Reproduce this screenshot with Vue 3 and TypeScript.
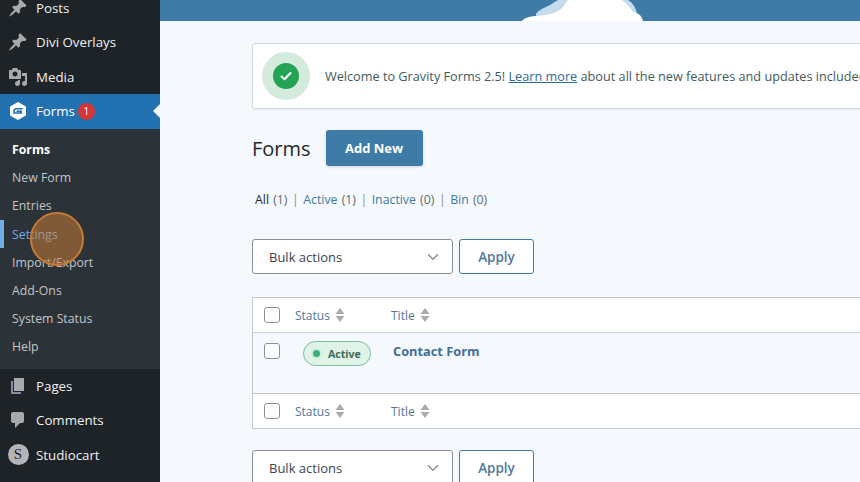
<script setup lang="ts">
const topItems = [
  { label: 'Posts', icon: 'pin' },
  { label: 'Divi Overlays', icon: 'pin' },
  { label: 'Media', icon: 'media' }
]
const subItems = ['Forms', 'New Form', 'Entries', 'Settings', 'Import/Export', 'Add-Ons', 'System Status', 'Help']
const filters = [
  { label: 'All', count: 1 },
  { label: 'Active', count: 1 },
  { label: 'Inactive', count: 0 },
  { label: 'Bin', count: 0 }
]
</script>

<template>
  <div class="page">
    <aside class="sidebar">
      <div v-for="item in topItems" :key="item.label" class="menu-item">
        <span class="menu-icon">
          <svg v-if="item.icon === 'pin'" width="20" height="20" viewBox="0 0 20 20">
            <path d="M10.44 3.02l1.82-1.82 6.36 6.35-1.83 1.82c-1.05-.68-2.48-.57-3.41.36l-.75.75c-.92.93-1.04 2.35-.35 3.41l-1.83 1.82-2.41-2.41-2.8 2.79c-.42.42-3.38 2.71-3.8 2.29s1.86-3.39 2.28-3.81l2.79-2.79L4.1 9.36l1.83-1.82c1.05.69 2.48.57 3.4-.36l.75-.75c.93-.92 1.05-2.35.36-3.41z" fill="#a7aaad" />
          </svg>
          <svg v-else width="20" height="20" viewBox="0 0 20 20">
            <path d="M13 11V4c0-.55-.45-1-1-1h-1.67L9 1H5L3.67 3H2c-.55 0-1 .45-1 1v7c0 .55.45 1 1 1h10c.55 0 1-.45 1-1zM7 4.500c1.380 0 2.500 1.120 2.500 2.500S8.380 9.500 7 9.500 4.500 8.380 4.500 7 5.620 4.500 7 4.500zM14 6h5v10.500c0 1.380-1.120 2.500-2.500 2.500S14 17.880 14 16.500s1.120-2.500 2.500-2.500c.17 0 .34.020.5.050V9h-3V6zm-4 8.050V13h2v3.500c0 1.380-1.120 2.500-2.500 2.500S7 17.880 7 16.500 8.120 14 9.500 14c.17 0 .34.020.5.050z" fill="#a7aaad" />
          </svg>
        </span>
        <span>{{ item.label }}</span>
      </div>

      <div class="menu-item current">
        <span class="menu-icon">
          <svg width="20" height="20" viewBox="0 0 20 20">
            <path d="M10 2 17 6v8l-7 4-7-4V6Z" fill="#fff" stroke="#fff" stroke-width="2" stroke-linejoin="round" />
            <path d="M14.500 7.800H8.200C6.900 7.800 6.200 8.600 6 10.200v1.800h7.300v-1.700H8.500" fill="none" stroke="#2271b1" stroke-width="1.600" />
          </svg>
        </span>
        <span>Forms</span>
        <span class="badge">1</span>
      </div>

      <div class="submenu">
        <div
          v-for="(sub, i) in subItems"
          :key="sub"
          class="sub-item"
          :class="{ head: i === 0, hovered: sub === 'Settings' }"
        >
          {{ sub }}
        </div>
      </div>

      <div class="menu-item">
        <span class="menu-icon">
          <svg width="20" height="20" viewBox="0 0 20 20">
            <path d="M5 16h8v2H3V5h2z" fill="#8f86a5" />
            <path d="M6 15V2h10v13z" fill="#a7aaad" />
          </svg>
        </span>
        <span>Pages</span>
      </div>
      <div class="menu-item">
        <span class="menu-icon">
          <svg width="20" height="20" viewBox="0 0 20 20">
            <path d="M5 2h9c1.100 0 2 .9 2 2v7c0 1.100-.9 2-2 2h-2l-5 5v-5H5c-1.100 0-2-.9-2-2V4c0-1.100.9-2 2-2z" fill="#a7aaad" />
          </svg>
        </span>
        <span>Comments</span>
      </div>
      <div class="menu-item">
        <span class="menu-icon">
          <span class="s-logo">S</span>
        </span>
        <span>Studiocart</span>
      </div>

      <div class="cursor-ring"></div>
    </aside>

    <main class="main">
      <div class="banner">
        <svg class="cloud" width="126" height="21" viewBox="0 0 126 21">
          <path d="M16 14C18 10 26 7 30 5 33 3 36 1 38 0H108C113 3 116 8 117 14V21H16Z" fill="#c4dcee" />
          <path d="M2 21C4 18 10 16 18 16 28 15 38 13 43 7 45 4 47 1 48 0H102C106 3 110 7 113 12 119 13 122 16 123 21Z" fill="#fff" />
        </svg>
      </div>

      <div class="content">
        <div class="notice">
          <span class="notice-ring">
            <span class="notice-check">
              <svg width="14" height="14" viewBox="0 0 14 14">
                <path d="M2.500 7.500 5.500 10.300 11.500 4" fill="none" stroke="#fff" stroke-width="2" stroke-linecap="round" stroke-linejoin="round" />
              </svg>
            </span>
          </span>
          <span class="notice-text">Welcome to Gravity Forms 2.5! <a class="notice-link">Learn more</a> about all the new features and updates included</span>
        </div>

        <div class="heading">
          <h1>Forms</h1>
          <button class="add-new">Add New</button>
        </div>

        <div class="filters">
          <template v-for="(f, i) in filters" :key="f.label">
            <span v-if="i > 0" class="sep">|</span>
            <span>
              <span :class="i === 0 ? 'filter-current' : 'filter-link'">{{ f.label }}</span>
              <span class="count"> ({{ f.count }})</span>
            </span>
          </template>
        </div>

        <div class="bulk">
          <div class="select">
            <span>Bulk actions</span>
            <svg width="12" height="8" viewBox="0 0 12 8">
              <path d="M1 1.200 6 6.200 11 1.200" fill="none" stroke="#8a8f94" stroke-width="1.400" />
            </svg>
          </div>
          <button class="apply">Apply</button>
        </div>

        <div class="table">
          <div class="row head-row">
            <span class="check"></span>
            <span class="col-status">Status
              <svg class="sort" width="10" height="16" viewBox="0 0 10 16">
                <path d="M5 1 9.500 7H.5ZM5 15 .5 9h9Z" fill="#a9acaf" />
              </svg>
            </span>
            <span class="col-title">Title
              <svg class="sort" width="10" height="16" viewBox="0 0 10 16">
                <path d="M5 1 9.500 7H.5ZM5 15 .5 9h9Z" fill="#a9acaf" />
              </svg>
            </span>
          </div>
          <div class="row body-row">
            <span class="check"></span>
            <span class="pill"><span class="pill-dot"></span>Active</span>
            <span class="form-name">Contact Form</span>
          </div>
          <div class="row foot-row">
            <span class="check"></span>
            <span class="col-status">Status
              <svg class="sort" width="10" height="16" viewBox="0 0 10 16">
                <path d="M5 1 9.500 7H.5ZM5 15 .5 9h9Z" fill="#a9acaf" />
              </svg>
            </span>
            <span class="col-title">Title
              <svg class="sort" width="10" height="16" viewBox="0 0 10 16">
                <path d="M5 1 9.500 7H.5ZM5 15 .5 9h9Z" fill="#a9acaf" />
              </svg>
            </span>
          </div>
        </div>

        <div class="bulk bottom">
          <div class="select">
            <span>Bulk actions</span>
            <svg width="12" height="8" viewBox="0 0 12 8">
              <path d="M1 1.200 6 6.200 11 1.200" fill="none" stroke="#8a8f94" stroke-width="1.400" />
            </svg>
          </div>
          <button class="apply">Apply</button>
        </div>
      </div>
    </main>
  </div>
</template>

<style>
html,
body {
  margin: 0;
  overflow: hidden;
}
</style>

<style scoped>
* {
  box-sizing: border-box;
}

.page {
  display: flex;
  width: 860px;
  height: 482px;
  overflow: hidden;
  font-family: "Open Sans", "Noto Sans", sans-serif;
  background: #f5f8fc;
}

/* sidebar */
.sidebar {
  position: relative;
  flex: 0 0 160px;
  margin-top: -9.500px;
  background: #1d2327;
  color: #f0f0f1;
  font-size: 13.300px;
}

.menu-item {
  position: relative;
  display: flex;
  align-items: center;
  height: 34.500px;
  padding-left: 8px;
}

.menu-icon {
  display: flex;
  align-items: center;
  justify-content: center;
  width: 20px;
  height: 20px;
  margin-right: 8px;
}

.current {
  background: #2271b1;
  color: #fff;
}

.current::after {
  content: "";
  position: absolute;
  right: 0;
  top: 10px;
  border: 7px solid transparent;
  border-right-color: #f5f8fc;
  border-left: 0;
}

.badge {
  display: flex;
  align-items: center;
  justify-content: center;
  width: 17px;
  height: 17px;
  margin-left: 3px;
  border-radius: 50%;
  background: #d63638;
  color: #fff;
  font-size: 10px;
}

.submenu {
  padding: 7px 0 7.500px;
  background: #2c3338;
  font-size: 12.300px;
  color: #c3c4c7;
}

.sub-item {
  display: flex;
  align-items: center;
  height: 28.200px;
  padding-left: 12px;
}

.sub-item.head {
  color: #fff;
  font-weight: 700;
}

.sub-item.hovered {
  color: #72aee6;
  box-shadow: inset 4px 0 0 #72aee6;
}

.s-logo {
  display: flex;
  align-items: center;
  justify-content: center;
  flex: 0 0 21px;
  height: 21px;
  border-radius: 50%;
  background: #b4b5b8;
  color: #1d2327;
  font-family: "Liberation Serif", serif;
  font-size: 15px;
}

.cursor-ring {
  position: absolute;
  left: 30px;
  top: 221.500px;
  width: 54px;
  height: 54px;
  border: 2px solid #c47a36;
  border-radius: 50%;
  background: rgba(205, 125, 55, 0.52);
}

/* main area */
.main {
  flex: 1;
  min-width: 0;
}

.banner {
  position: relative;
  height: 21px;
  background: #3e7ba6;
}

.cloud {
  position: absolute;
  left: 360px;
  top: 0;
}

.content {
  padding: 22px 0 0 92px;
  width: 900px;
}

.notice {
  display: flex;
  align-items: center;
  height: 66px;
  padding-left: 9px;
  background: #fff;
  border: 1px solid #d5d9de;
  border-radius: 3px;
  box-shadow: 0 1px 3px rgba(0, 0, 0, 0.06);
}

.notice-ring {
  display: flex;
  align-items: center;
  justify-content: center;
  width: 48px;
  height: 48px;
  border-radius: 50%;
  background: #d4eadc;
}

.notice-check {
  display: flex;
  align-items: center;
  justify-content: center;
  width: 26px;
  height: 26px;
  border-radius: 50%;
  background: #23a455;
}

.notice-text {
  margin-left: 15px;
  color: #3f5a5c;
  font-size: 12.700px;
  font-weight: 500;
  white-space: nowrap;
}

.notice-link {
  color: #2f6a92;
  text-decoration: underline;
}

.heading {
  display: flex;
  align-items: center;
  margin-top: 20px;
  height: 38px;
}

h1 {
  margin: 0 15px 0 0;
  color: #23282d;
  font-size: 20px;
  font-weight: 500;
}

.add-new {
  width: 97px;
  height: 36px;
  border: 0;
  border-radius: 3px;
  background: #3e7ba6;
  box-shadow: 0 1px 3px rgba(0, 0, 0, 0.15);
  color: #fff;
  font-family: inherit;
  font-size: 13px;
  font-weight: 700;
}

.filters {
  display: flex;
  align-items: center;
  gap: 4.500px;
  margin-top: 23px;
  height: 18px;
  padding-left: 3px;
  color: #646970;
  font-size: 12.300px;
  white-space: nowrap;
}

.filter-current {
  color: #23282d;
}

.filter-link {
  color: #3e7ba6;
}

.count {
  margin-left: 1px;
}

.sep {
  color: #8a8f94;
  opacity: 0.99;
}

.bulk {
  display: flex;
  gap: 6px;
  margin-top: 31px;
}

.bulk.bottom {
  margin-top: 21px;
}

.select {
  display: flex;
  align-items: center;
  justify-content: space-between;
  width: 201px;
  height: 35px;
  padding: 0 13px 0 16px;
  background: #fff;
  border: 1px solid #8c8f94;
  border-radius: 3px;
  color: #3c434a;
  font-size: 13px;
}

.apply {
  width: 75px;
  height: 35px;
  padding: 1px 0 0 0;
  background: #fff;
  border: 1px solid #3e7ba6;
  border-radius: 3px;
  color: #50789a;
  font-family: inherit;
  font-size: 13.500px;
  font-weight: 600;
}

.table {
  margin-top: 23px;
  border: 1px solid #c3c7cc;
}

.row {
  position: relative;
  display: flex;
  background: #fff;
}

.head-row {
  align-items: center;
  height: 35px;
  border-bottom: 1px solid #d0d4d9;
  padding-left: 11px;
}

.foot-row {
  align-items: center;
  height: 35px;
  border-top: 1px solid #c3c7cc;
  padding-left: 11px;
}

.body-row {
  align-items: flex-start;
  height: 60px;
  padding: 10px 0 0 11px;
  background: #f5f8fc;
}

.check {
  flex: 0 0 16px;
  height: 16px;
  background: #fff;
  border: 1px solid #8c8f94;
  border-radius: 3px;
}

.col-status,
.col-title {
  display: flex;
  align-items: center;
  gap: 5px;
  color: #50789a;
  font-size: 12px;
}

.col-status {
  margin-left: 15px;
  width: 96px;
}

.pill {
  display: flex;
  align-items: center;
  height: 25px;
  width: 68px;
  margin: -2px 0 0 23px;
  padding-left: 9px;
  background: #dff3e8;
  border: 1px solid #78c09a;
  border-radius: 13px;
  color: #3f6b58;
  font-size: 10.600px;
  font-weight: 700;
}

.pill-dot {
  width: 7px;
  height: 7px;
  margin-right: 8px;
  border-radius: 50%;
  background: #3fae7b;
  box-shadow: 0 0 0 2px #cdeedd;
}

.form-name {
  margin: -1px 0 0 22px;
  color: #3e6f96;
  font-size: 12.800px;
  font-weight: 700;
}
</style>
